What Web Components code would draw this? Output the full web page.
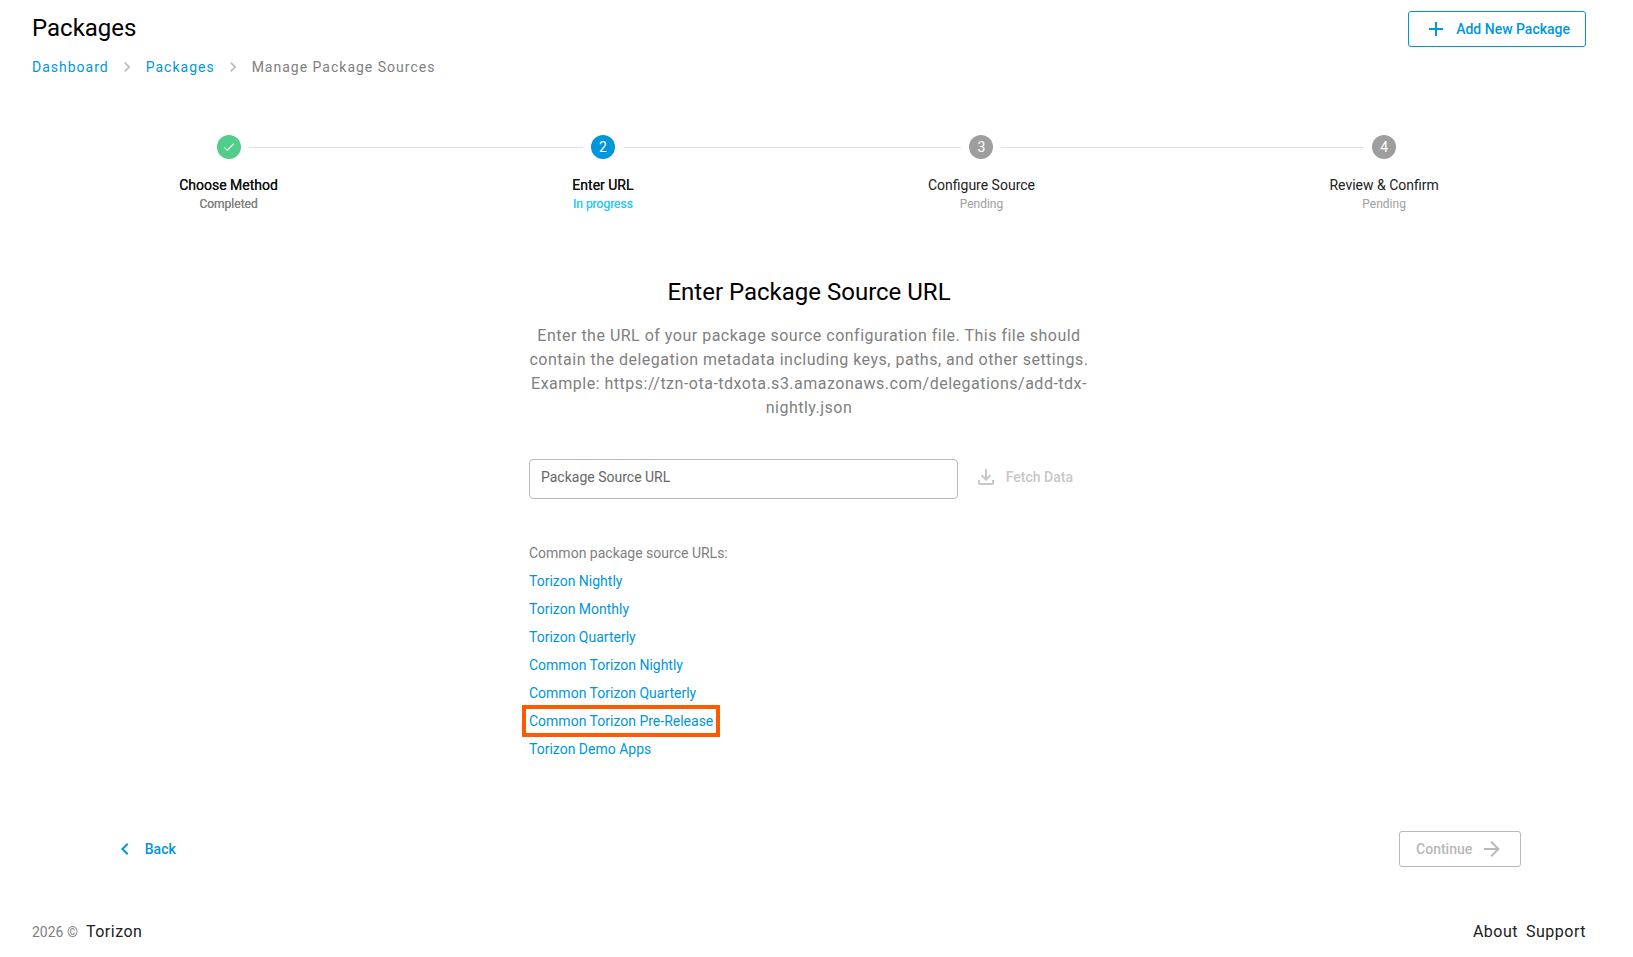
<!DOCTYPE html>
<html lang="en">
<head>
<meta charset="utf-8">
<meta name="viewport" content="width=device-width, initial-scale=1">
<title>Manage Package Sources - Torizon</title>
<style>
  :root {
    --primary: #0096dc;
    --success: #50cd89;
    --progress: #2ccbf3;
    --neutral: #9e9e9e;
    --highlight: #ff5a00;
  }
  body {
    margin: 0;
    background: #fff;
    color: #212121;
    font: 14px/20px Roboto, "Liberation Sans", sans-serif;
  }
</style>
</head>
<body>
<tz-app></tz-app>

<template id="tz-app">
  <style>
    :host {
      display: flex;
      flex-direction: column;
      box-sizing: border-box;
      min-height: 100vh;
      padding: 11px 47px 13px 32px;
    }
    header { display: flex; justify-content: space-between; align-items: flex-start; }
    h1 { margin: 0; color: #000; font-size: 24px; font-weight: 400; line-height: 34px; }
    tz-breadcrumbs { margin-top: 10px; }
    tz-stepper { margin-top: 58px; }
    tz-source-form { margin: 63px auto 0; }
    .actions {
      display: flex;
      justify-content: space-between;
      width: calc(100% * 11 / 12);
      margin: 68px auto 0;
    }
    tz-footer { margin-top: auto; }
  </style>
  <header>
    <h1>Packages</h1>
    <tz-button variant="outlined"><tz-icon slot="before" name="plus"></tz-icon>Add New Package</tz-button>
  </header>
  <tz-breadcrumbs></tz-breadcrumbs>
  <tz-stepper>
    <tz-step status="complete" step="1">Choose Method<span slot="note">Completed</span></tz-step>
    <tz-step status="active" step="2">Enter URL<span slot="note">In progress</span></tz-step>
    <tz-step status="pending" step="3">Configure Source<span slot="note">Pending</span></tz-step>
    <tz-step status="pending" step="4">Review &amp; Confirm<span slot="note">Pending</span></tz-step>
  </tz-stepper>
  <tz-source-form></tz-source-form>
  <div class="actions">
    <tz-button variant="text"><tz-icon slot="before" name="chevron-left"></tz-icon>Back</tz-button>
    <tz-button variant="outlined" disabled>Continue<tz-icon slot="after" name="arrow-right"></tz-icon></tz-button>
  </div>
  <tz-footer></tz-footer>
</template>

<template id="tz-button">
  <style>
    :host { display: block; flex: none; }
    button {
      display: flex;
      align-items: center;
      gap: 8px;
      box-sizing: border-box;
      height: 36px;
      padding: 0 15px;
      border: 1px solid transparent;
      border-radius: 3px;
      background: none;
      color: var(--primary);
      font: 500 14px/20px Roboto, "Liberation Sans", sans-serif;
      white-space: nowrap;
      cursor: pointer;
    }
    :host([variant="outlined"]) button { border-color: currentColor; }
    button:disabled { color: #b8b8b8; cursor: default; }
    :host([variant="outlined"]) button:disabled { padding: 0 16px; }
    :host([variant="text"]) button:disabled { color: #c8c8c8; }
  </style>
  <button type="button"><slot name="before"></slot><slot></slot><slot name="after"></slot></button>
</template>

<template id="tz-breadcrumbs">
  <style>
    :host { display: block; }
    ol { display: flex; margin: 0; padding: 0; list-style: none; letter-spacing: 1px; color: #808080; }
    li { display: flex; align-items: center; white-space: nowrap; }
    a { color: var(--primary); text-decoration: none; }
    tz-icon { --icon-size: 20px; margin: 0 9px 0 8px; color: #bdbdbd; }
  </style>
  <nav aria-label="Breadcrumb">
    <ol>
      <li><a href="#dashboard">Dashboard</a><tz-icon name="chevron-right"></tz-icon></li>
      <li><a href="#packages">Packages</a><tz-icon name="chevron-right"></tz-icon></li>
      <li aria-current="page">Manage Package Sources</li>
    </ol>
  </nav>
</template>

<template id="tz-stepper">
  <style>
    :host { display: flex; }
    ::slotted(tz-step) { flex: 1 1 auto; }
  </style>
  <slot></slot>
</template>

<template id="tz-step">
  <style>
    :host { display: block; text-align: center; }
    .track { display: flex; align-items: center; gap: 8px; }
    .track::before, .track::after { content: ""; flex: 1; height: 1px; background: #e0e0e0; }
    :host(:first-child) .track::before, :host(:last-child) .track::after { background: none; }
    .dot {
      display: grid;
      place-items: center;
      width: 24px;
      height: 24px;
      border-radius: 50%;
      background: var(--neutral);
      color: #fff;
      font-size: 14px;
      line-height: 24px;
    }
    :host([status="complete"]) .dot { background: var(--success); }
    :host([status="active"]) .dot { background: var(--primary); }
    tz-icon { --icon-size: 14px; }
    .label { margin-top: 16px; line-height: 20px; }
    .note { color: var(--neutral); font-size: 12px; line-height: 18px; }
    :host([status="complete"]) .label, :host([status="active"]) .label { color: #111; text-shadow: 0 0 0 currentColor; }
    :host([status="complete"]) .note { color: #808080; text-shadow: 0 0 0 currentColor; }
    :host([status="active"]) .note { color: var(--progress); text-shadow: 0 0 0 currentColor; }
  </style>
  <div class="track"><div class="dot"></div></div>
  <div class="label"><slot></slot></div>
  <div class="note"><slot name="note"></slot></div>
</template>

<template id="tz-source-form">
  <style>
    :host { display: block; width: 100%; max-width: 560px; }
    h2 { margin: 0 0 16px; color: #000; font-size: 24px; font-weight: 400; line-height: 32px; text-align: center; }
    .intro { margin: 0 0 39px; color: #808080; font-size: 16px; line-height: 24px; letter-spacing: 0.03125em; text-align: center; }
    form { display: flex; align-items: flex-start; }
    input {
      flex: 1;
      min-width: 0;
      box-sizing: border-box;
      height: 40px;
      padding: 0 11px 4px;
      border: 1px solid #bbb;
      border-radius: 4px;
      background: #fff;
      color: #212121;
      font: inherit;
    }
    input::placeholder { color: #666; opacity: 1; }
    .common { margin: 40px 0 0; color: #808080; line-height: 28px; }
    ul { margin: 0; padding: 0; list-style: none; }
    li { display: flex; align-items: center; height: 28px; }
    a { color: var(--primary); line-height: 18px; text-decoration: none; }
    a.marked { outline: 4px solid var(--highlight); outline-offset: 3px; }
  </style>
  <h2>Enter Package Source URL</h2>
  <p class="intro">Enter the URL of your package source configuration file. This file should contain the delegation metadata including keys, paths, and other settings. Example: https://tzn-ota-tdxota.s3.amazonaws.com/delegations/add-tdx-nightly.json</p>
  <form>
    <input type="text" aria-label="Package Source URL" placeholder="Package Source URL">
    <tz-button variant="text" disabled><tz-icon slot="before" name="download"></tz-icon>Fetch Data</tz-button>
  </form>
  <p class="common">Common package source URLs:</p>
  <ul>
    <li><a href="#torizon-nightly">Torizon Nightly</a></li>
    <li><a href="#torizon-monthly">Torizon Monthly</a></li>
    <li><a href="#torizon-quarterly">Torizon Quarterly</a></li>
    <li><a href="#common-nightly">Common Torizon Nightly</a></li>
    <li><a href="#common-quarterly">Common Torizon Quarterly</a></li>
    <li><a class="marked" href="#common-prerelease">Common Torizon Pre-Release</a></li>
    <li><a href="#demo-apps">Torizon Demo Apps</a></li>
  </ul>
</template>

<template id="tz-footer">
  <style>
    :host { display: block; }
    footer { display: flex; justify-content: space-between; line-height: 24px; }
    div, nav { display: flex; align-items: baseline; gap: 8px; }
    span { color: #808080; }
    a { color: #212121; font-size: 16px; letter-spacing: 0.03125em; text-decoration: none; }
  </style>
  <footer>
    <div><span>2026 ©</span><a href="#torizon">Torizon</a></div>
    <nav aria-label="Footer"><a href="#about">About</a><a href="#support">Support</a></nav>
  </footer>
</template>

<script>
  const ICONS = {
    "plus": "M19 13h-6v6h-2v-6H5v-2h6V5h2v6h6z",
    "check": "M21 7 9 19l-5.500-5.500 1.410-1.410L9 16.170 19.590 5.590z",
    "chevron-left": "M15.410 16.580 10.830 12l4.580-4.590L14 6l-6 6 6 6z",
    "chevron-right": "M8.590 16.580 13.170 12 8.590 7.410 10 6l6 6-6 6z",
    "arrow-right": "M4 11v2h12l-5.500 5.500 1.420 1.420L19.840 12l-7.920-7.920L10.500 5.500 16 11z",
    "download": "M12 16l-5-5 1.400-1.450 2.600 2.600V4h2v8.150l2.600-2.600L17 11zM6 20c-1.100 0-2-.9-2-2v-3h2v3h12v-3h2v3c0 1.100-.9 2-2 2z"
  };

  class TemplateElement extends HTMLElement {
    constructor() {
      super();
      const template = document.getElementById(this.localName);
      this.attachShadow({ mode: "open" }).append(template.content.cloneNode(true));
    }
  }

  class TzIcon extends HTMLElement {
    constructor() {
      super();
      this.attachShadow({ mode: "open" });
    }
    connectedCallback() {
      this.shadowRoot.innerHTML = `
        <style>
          :host { display: block; flex: none; width: var(--icon-size, 24px); height: var(--icon-size, 24px); }
          svg { display: block; width: 100%; height: 100%; fill: currentColor; }
        </style>
        <svg viewBox="0 0 24 24" aria-hidden="true"><path d="${ICONS[this.getAttribute("name")]}"/></svg>`;
    }
  }

  class TzButton extends TemplateElement {
    connectedCallback() {
      this.shadowRoot.querySelector("button").disabled = this.hasAttribute("disabled");
    }
  }

  class TzStep extends TemplateElement {
    connectedCallback() {
      const dot = this.shadowRoot.querySelector(".dot");
      if (this.getAttribute("status") === "complete") {
        dot.innerHTML = '<tz-icon name="check"></tz-icon>';
      } else {
        dot.textContent = this.getAttribute("step");
      }
    }
  }

  customElements.define("tz-icon", TzIcon);
  customElements.define("tz-button", TzButton);
  customElements.define("tz-step", TzStep);
  customElements.define("tz-breadcrumbs", class extends TemplateElement {});
  customElements.define("tz-stepper", class extends TemplateElement {});
  customElements.define("tz-source-form", class extends TemplateElement {});
  customElements.define("tz-footer", class extends TemplateElement {});
  customElements.define("tz-app", class extends TemplateElement {});
</script>
</body>
</html>
